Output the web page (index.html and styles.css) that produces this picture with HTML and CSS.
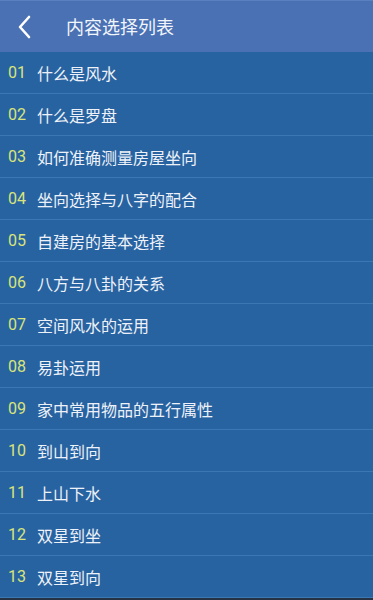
FILE: index.html
```html
<!DOCTYPE html>
<html lang="zh">
<head>
<meta charset="utf-8">
<title>内容选择列表</title>
<link rel="stylesheet" href="styles.css">
</head>
<body>
<div class="app">
  <header class="bar">
    <span class="back">
      <svg width="14" height="24" viewBox="0 0 14 24"><path d="M12 2 L3 12 L12 22" fill="none" stroke="#fff" stroke-width="2.6" stroke-linecap="round" stroke-linejoin="round"/></svg>
    </span>
    <span class="title">内容选择列表</span>
  </header>
  <ul class="list">
    <li class="row"><span class="num">01</span><span class="txt">什么是风水</span></li>
    <li class="row"><span class="num">02</span><span class="txt">什么是罗盘</span></li>
    <li class="row"><span class="num">03</span><span class="txt">如何准确测量房屋坐向</span></li>
    <li class="row"><span class="num">04</span><span class="txt">坐向选择与八字的配合</span></li>
    <li class="row"><span class="num">05</span><span class="txt">自建房的基本选择</span></li>
    <li class="row"><span class="num">06</span><span class="txt">八方与八卦的关系</span></li>
    <li class="row"><span class="num">07</span><span class="txt">空间风水的运用</span></li>
    <li class="row"><span class="num">08</span><span class="txt">易卦运用</span></li>
    <li class="row"><span class="num">09</span><span class="txt">家中常用物品的五行属性</span></li>
    <li class="row"><span class="num">10</span><span class="txt">到山到向</span></li>
    <li class="row"><span class="num">11</span><span class="txt">上山下水</span></li>
    <li class="row"><span class="num">12</span><span class="txt">双星到坐</span></li>
    <li class="row"><span class="num">13</span><span class="txt">双星到向</span></li>
  </ul>
  <div class="bottom"></div>
</div>
</body>
</html>
```

FILE: styles.css
```css
* { box-sizing: border-box; }
html, body { margin: 0; padding: 0; }
body {
  width: 373px;
  height: 600px;
  overflow: hidden;
  background: #2863a1;
  font-family: "Noto Sans CJK SC", "Noto Sans", sans-serif;
}
.app { display: flex; flex-direction: column; height: 600px; }
.bar {
  height: 52px;
  flex: none;
  background: #4a71b4;
  border-top: 1px solid #5a80bf;
  display: flex;
  align-items: center;
  padding-left: 17px;
}
.back { display: flex; width: 14px; height: 24px; }
.title {
  margin-left: 35px;
  color: #f2f5fa;
  font-size: 18px;
  line-height: 1;
  padding-bottom: 2px;
}
.list { list-style: none; margin: 0; padding: 0; flex: none; }
.row {
  height: 42px;
  display: flex;
  align-items: center;
  border-bottom: 1px solid #3a77b3;
  padding-left: 8px;
}
.num {
  width: 29px;
  color: #d9e47a;
  font-family: Roboto, "Noto Sans", sans-serif;
  font-size: 16px;
}
.txt {
  color: #eef2f8;
  font-size: 16px;
}
.bottom { flex: 1; background: #243244; }
```
